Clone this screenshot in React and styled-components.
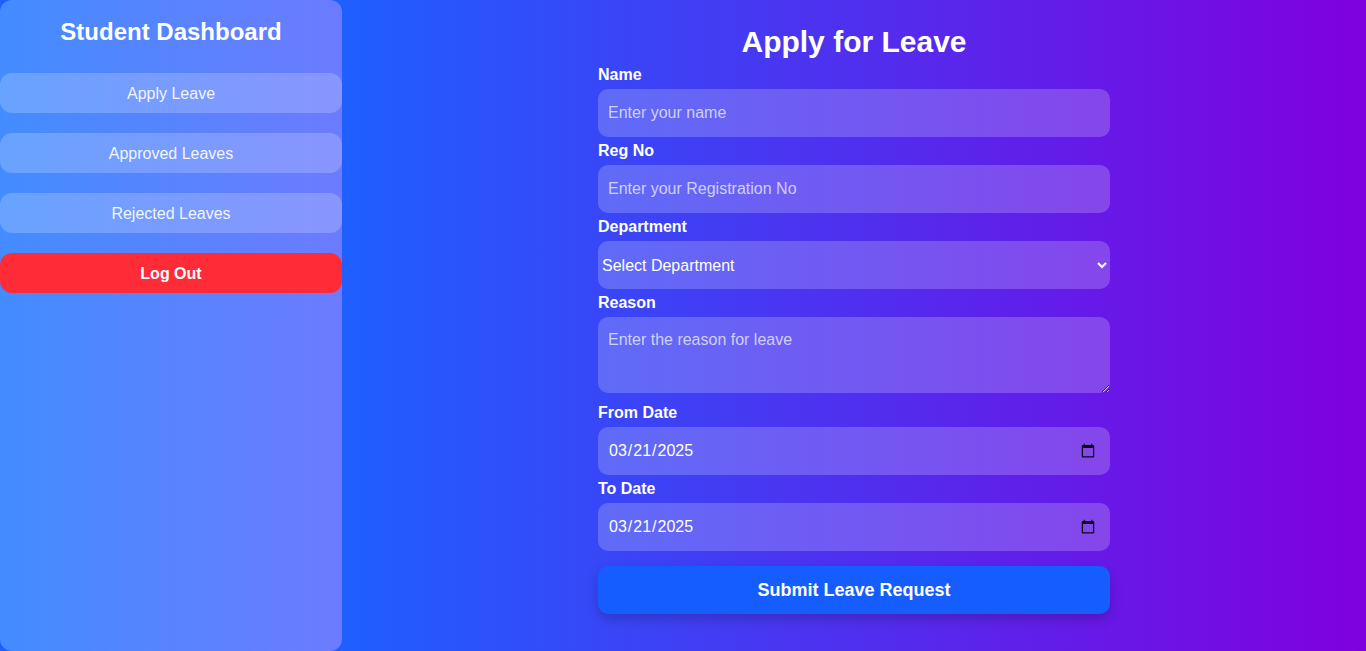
import React from 'react';
import styled, { createGlobalStyle } from 'styled-components';

const GlobalStyle = createGlobalStyle`
  * {
    box-sizing: border-box;
  }

  body {
    margin: 0;
    font-family: "Liberation Sans", Arial, sans-serif;
    overflow: hidden;
  }
`;

const Layout = styled.div`
  display: flex;
  height: 100vh;
  background: #1f5fff;
`;

const Sidebar = styled.aside`
  width: 342px;
  flex-shrink: 0;
  padding-top: 18px;
  border-radius: 12px;
  background: linear-gradient(to right, #438cff, #6c7bff);
  display: flex;
  flex-direction: column;
`;

const SidebarTitle = styled.h2`
  margin: 0 0 27px;
  font-size: 24px;
  line-height: 28px;
  font-weight: 700;
  color: #fff;
  text-align: center;
`;

const NavButton = styled.button`
  height: 40px;
  margin-bottom: 20px;
  padding-top: 2px;
  border: none;
  border-radius: 12px;
  font-family: "Liberation Sans", Arial, sans-serif;
  font-size: 16px;
  cursor: pointer;
  color: ${(p) => (p.$danger ? '#fff' : 'rgba(255, 255, 255, 0.92)')};
  background: ${(p) => (p.$danger ? '#ff2b37' : 'rgba(255, 255, 255, 0.2)')};
  font-weight: ${(p) => (p.$danger ? 700 : 400)};
`;

const Main = styled.main`
  flex: 1;
  display: flex;
  flex-direction: column;
  align-items: center;
  padding-top: 25px;
  background: linear-gradient(to right, #1f5fff, #8000df);
`;

const Title = styled.h1`
  margin: 0 0 6px;
  font-size: 30px;
  line-height: 34px;
  font-weight: 700;
  color: #fff;
`;

const Form = styled.form`
  width: 512px;
  display: flex;
  flex-direction: column;
`;

const Label = styled.label`
  display: block;
  padding-top: 1px;
  margin-bottom: 5px;
  font-size: 16px;
  line-height: 18px;
  font-weight: 700;
  color: #fff;
`;

const fieldBase = `
  display: block;
  width: 100%;
  border: none;
  border-radius: 10px;
  background: rgba(255, 255, 255, 0.2);
  color: #fff;
  font-family: "Liberation Sans", Arial, sans-serif;
  font-size: 16px;
  outline: none;

  &::placeholder {
    color: rgba(255, 255, 255, 0.7);
  }
`;

const Input = styled.input`
  ${fieldBase}
  height: 48px;
  padding: 0 12px 0 10px;
  margin-bottom: 4px;

  &::-webkit-calendar-picker-indicator {
    opacity: 0.9;
  }
`;

const Select = styled.select`
  ${fieldBase}
  height: 48px;
  padding: 0;
  margin-bottom: 4px;

  option {
    color: #000;
  }
`;

const TextArea = styled.textarea`
  ${fieldBase}
  height: 76px;
  padding: 14px 10px 12px;
  margin-bottom: 10px;
  resize: vertical;
`;

const SubmitButton = styled.button`
  height: 48px;
  margin-top: 11px;
  border: none;
  border-radius: 10px;
  background: #155dff;
  color: #fff;
  font-family: "Liberation Sans", Arial, sans-serif;
  font-size: 18px;
  font-weight: 700;
  cursor: pointer;
  box-shadow: 0 5px 12px rgba(0, 0, 0, 0.2);
`;

const App = () => {
  const navItems = ['Apply Leave', 'Approved Leaves', 'Rejected Leaves'];

  return (
    <>
      <GlobalStyle />
      <Layout>
        <Sidebar>
          <SidebarTitle>Student Dashboard</SidebarTitle>
          {navItems.map((item) => (
            <NavButton key={item}>{item}</NavButton>
          ))}
          <NavButton $danger>Log Out</NavButton>
        </Sidebar>

        <Main>
          <Title>Apply for Leave</Title>
          <Form onSubmit={(e) => e.preventDefault()}>
            <Label>Name</Label>
            <Input type="text" placeholder="Enter your name" />

            <Label>Reg No</Label>
            <Input type="text" placeholder="Enter your Registration No" />

            <Label>Department</Label>
            <Select defaultValue="">
              <option value="">Select Department</option>
              <option value="cse">CSE</option>
              <option value="ece">ECE</option>
              <option value="mech">MECH</option>
            </Select>

            <Label>Reason</Label>
            <TextArea placeholder="Enter the reason for leave" />

            <Label>From Date</Label>
            <Input type="date" defaultValue="2025-03-21" />

            <Label>To Date</Label>
            <Input type="date" defaultValue="2025-03-21" />

            <SubmitButton type="submit">Submit Leave Request</SubmitButton>
          </Form>
        </Main>
      </Layout>
    </>
  );
};

export default App;
